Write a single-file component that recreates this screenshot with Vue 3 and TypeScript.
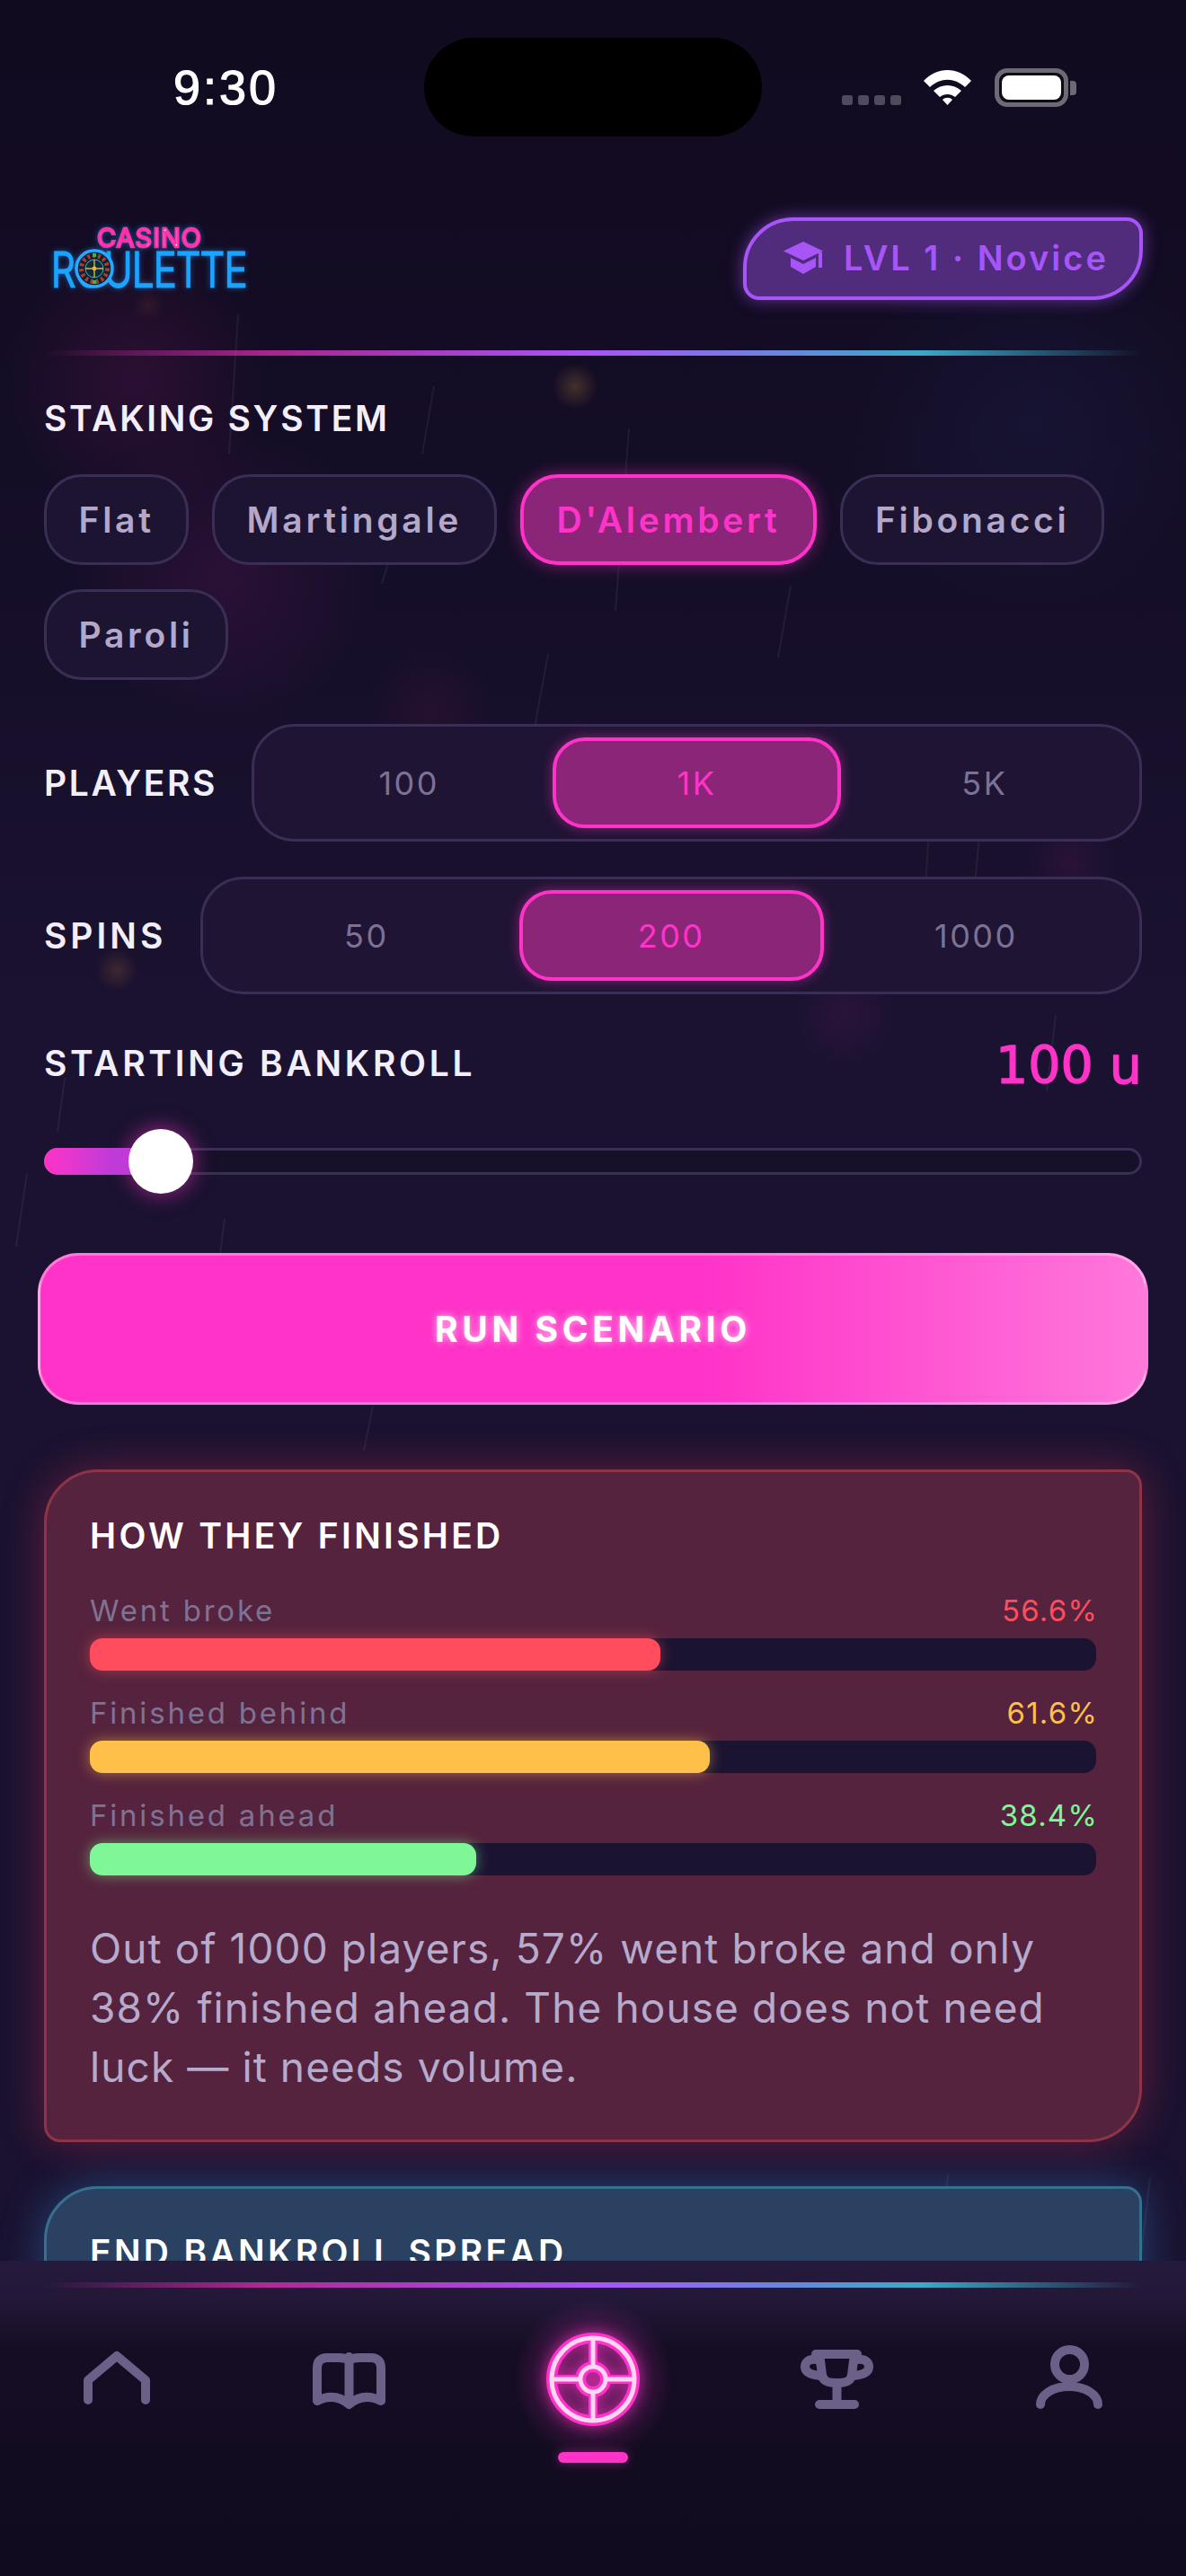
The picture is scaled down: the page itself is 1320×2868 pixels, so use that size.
<script setup lang="ts">
interface Bar { label: string; value: string; width: number; color: string }
const chips: string[] = ['Flat', 'Martingale', "D'Alembert", 'Fibonacci', 'Paroli']
const players: string[] = ['100', '1K', '5K']
const spins: string[] = ['50', '200', '1000']
const bars: Bar[] = [
  { label: 'Went broke', value: '56.6%', width: 56.7, color: '#ff4d5e' },
  { label: 'Finished behind', value: '61.6%', width: 61.6, color: '#ffc04a' },
  { label: 'Finished ahead', value: '38.4%', width: 38.4, color: '#7ff797' },
]
const streaks: number[][] = [
  [483, 430, 470, 505], [700, 477, 685, 680], [880, 652, 866, 732], [610, 728, 595, 810],
  [1040, 840, 1030, 985], [1090, 930, 1080, 1040], [1222, 1005, 1212, 1080], [72, 1200, 64, 1260],
  [30, 1307, 18, 1388], [250, 1357, 242, 1420], [415, 1565, 405, 1615], [1175, 1130, 1165, 1215],
  [265, 350, 255, 505], [440, 600, 425, 650], [1055, 2420, 1050, 2480], [1280, 2425, 1270, 2510],
]
const glows: number[][] = [
  [250, 640, 170, 255, 40, 190, 0.09], [640, 430, 26, 255, 190, 60, 0.2], [1150, 470, 210, 50, 100, 200, 0.08],
  [480, 790, 70, 255, 40, 120, 0.06], [130, 1080, 24, 255, 150, 60, 0.16], [1190, 960, 50, 255, 40, 160, 0.08],
  [940, 1130, 60, 255, 40, 190, 0.07], [165, 340, 18, 255, 150, 60, 0.08], [150, 420, 150, 255, 40, 170, 0.1],
]
function glowStyle(g: number[]) {
  return {
    left: `${g[0] - g[2]}px`, top: `${g[1] - g[2]}px`, width: `${g[2] * 2}px`, height: `${g[2] * 2}px`,
    background: `radial-gradient(circle, rgba(${g[3]},${g[4]},${g[5]},${g[6]}), transparent 70%)`,
  }
}
</script>

<template>
  <div class="phone">
    <div class="backdrop">
      <span v-for="(g, i) in glows" :key="i" class="glow" :style="glowStyle(g)"></span>
      <svg class="rain" width="1320" height="2868" viewBox="0 0 1320 2868">
        <line v-for="(s, i) in streaks" :key="i" :x1="s[0]" :y1="s[1]" :x2="s[2]" :y2="s[3]" stroke="#ffffff" stroke-opacity="0.06" stroke-width="2" />
      </svg>
    </div>

    <div class="status">
      <span class="time">9:30</span>
      <div class="island"></div>
      <div class="status-icons">
        <div class="signal"><i></i><i></i><i></i><i></i></div>
        <svg class="wifi" width="57" height="42" viewBox="0 0 57 42">
          <path d="M2 15 C17 -1 40 -1 55 15 L48 22 C36 11 21 11 9 22 Z" fill="#fff" />
          <path d="M13 26 C22 18 35 18 44 26 L37 33 C32 29 25 29 20 33 Z" fill="#fff" />
          <path d="M23 36 C26 33 31 33 34 36 L28.5 42 Z" fill="#fff" />
        </svg>
        <div class="battery"><div class="battery-fill"></div></div>
        <div class="battery-cap"></div>
      </div>
    </div>

    <header class="top">
      <svg class="logo" width="226" height="76" viewBox="0 0 226 76">
        <text class="logo-casino" x="112" y="24" text-anchor="middle" textLength="116" lengthAdjust="spacing">CASINO</text>
        <text class="logo-roulette" x="3" y="68" textLength="218" lengthAdjust="spacingAndGlyphs">ROULETTE</text>
        <g transform="translate(51 48)">
          <circle r="20" fill="#0f2030" stroke="#28a8ff" stroke-width="3.5" />
          <circle r="14.5" fill="none" stroke="#b33a2a" stroke-width="5" stroke-dasharray="3 3" />
          <circle r="10" fill="#0f2a33" stroke="#39b6c9" stroke-width="1" />
          <path d="M0 -10 V10 M-10 0 H10" stroke="#d8b24a" stroke-width="1.4" />
          <circle r="2.4" fill="#e0b84c" />
          <rect x="-2" y="-17" width="4" height="4" fill="#3bb54a" />
          <rect x="-2" y="13" width="4" height="4" fill="#3bb54a" />
        </g>
      </svg>
      <div class="level">
        <svg width="44" height="36" viewBox="0 0 44 36">
          <path d="M22 0 L44 10.5 L22 21 L0 10.5 Z" fill="#a855f7" />
          <path d="M8 18 L22 25 L36 18 V28 L22 36 L8 28 Z" fill="#a855f7" />
          <rect x="39" y="12" width="4" height="17" fill="#a855f7" />
        </svg>
        <span>LVL 1 · Novice</span>
      </div>
    </header>
    <div class="rule"></div>

    <main class="content">
      <h2 class="label">STAKING SYSTEM</h2>
      <div class="chips">
        <button v-for="c in chips" :key="c" class="chip" :class="{ on: c === `D'Alembert` }">{{ c }}</button>
      </div>

      <div class="seg-row">
        <h2 class="label players">PLAYERS</h2>
        <div class="seg">
          <span v-for="p in players" :key="p" class="seg-item" :class="{ on: p === '1K' }">{{ p }}</span>
        </div>
      </div>
      <div class="seg-row second">
        <h2 class="label spins">SPINS</h2>
        <div class="seg">
          <span v-for="p in spins" :key="p" class="seg-item" :class="{ on: p === '200' }">{{ p }}</span>
        </div>
      </div>

      <div class="bank-head">
        <h2 class="label bankroll">STARTING BANKROLL</h2>
        <span class="bank-value">100 u</span>
      </div>
      <div class="slider">
        <div class="slider-fill"></div>
        <div class="slider-thumb"></div>
      </div>

      <button class="run">RUN SCENARIO</button>

      <section class="card red">
        <h3 class="card-title">HOW THEY FINISHED</h3>
        <div v-for="b in bars" :key="b.label" class="stat">
          <div class="stat-head">
            <span class="stat-label">{{ b.label }}</span>
            <span class="stat-value" :style="{ color: b.color }">{{ b.value }}</span>
          </div>
          <div class="track">
            <div class="fill" :style="{ width: b.width + '%', background: b.color, boxShadow: `0 0 15px ${b.color}80` }"></div>
          </div>
        </div>
        <p class="note">Out of 1000 players, 57% went broke and only 38% finished ahead. The house does not need luck — it needs volume.</p>
      </section>

      <section class="card blue">
        <h3 class="card-title">END BANKROLL SPREAD</h3>
      </section>
    </main>

    <nav class="nav">
      <div class="rule nav-rule"></div>
      <div class="nav-items">
        <div class="nav-item">
          <svg width="84" height="84" viewBox="0 0 84 84" fill="none" stroke="#6d6088" stroke-width="10" stroke-linecap="round" stroke-linejoin="round">
            <path d="M11 64 V42 L43 15 L75 42 V64" />
          </svg>
        </div>
        <div class="nav-item">
          <svg width="84" height="84" viewBox="0 0 84 84" fill="none" stroke="#6d6088" stroke-width="10" stroke-linecap="round" stroke-linejoin="round">
            <path d="M6 65 V28 C6 21 10 17 17 17 H30 C35 17 39 18 41.5 20 C44 18 48 17 53 17 H66 C73 17 77 21 77 28 V65 C65 59 53 59 41.5 69 C30 59 18 59 6 65 Z" />
            <path d="M41.5 16 V68" />
          </svg>
        </div>
        <div class="nav-item active">
          <svg class="wheel" width="104" height="104" viewBox="0 0 104 104" fill="none">
            <g stroke="#ff33c8" stroke-width="12">
              <circle cx="52" cy="52" r="46" />
              <circle cx="52" cy="52" r="14" />
              <path d="M52 6 V38 M52 66 V98 M6 52 H38 M66 52 H98" stroke-width="10" />
            </g>
            <g stroke="#ffd6f4" stroke-width="5">
              <circle cx="52" cy="52" r="46" />
              <circle cx="52" cy="52" r="14" />
              <path d="M52 6 V38 M52 66 V98 M6 52 H38 M66 52 H98" />
            </g>
          </svg>
          <div class="indicator"></div>
        </div>
        <div class="nav-item">
          <svg width="84" height="84" viewBox="0 0 84 84" fill="none" stroke="#6d6088" stroke-width="10" stroke-linecap="round" stroke-linejoin="round">
            <path d="M19 13 H65" />
            <path d="M23 13 L26 36 C27 44 34 45 42.5 45 C51 45 58 44 59 36 L62 13" />
            <path d="M20 19 C11 18 7 22 7 27 C7 33 13 36 24 37 M65 19 C74 18 78 22 78 27 C78 33 72 36 61 37" />
            <path d="M42.5 45 V69 M23 69 H62" />
          </svg>
        </div>
        <div class="nav-item">
          <svg width="84" height="84" viewBox="0 0 84 84" fill="none" stroke="#6d6088" stroke-width="10" stroke-linecap="round" stroke-linejoin="round">
            <circle cx="42.5" cy="24.5" r="16.5" />
            <path d="M10 69 C10 58 24 49 42 49 C60 49 74 58 74 69" />
          </svg>
        </div>
      </div>
    </nav>
  </div>
</template>

<style>
html, body { margin: 0; background: #120c20; }
</style>

<style scoped>
.phone {
  position: relative;
  width: 1320px;
  height: 2868px;
  overflow: hidden;
  font-family: Inter, "Noto Sans", sans-serif;
  background: linear-gradient(180deg, #110b20 0%, #130c24 12%, #1a1230 40%, #1a1230 100%);
  color: #f3effa;
}
.backdrop { position: absolute; inset: 0; pointer-events: none; }
.glow { position: absolute; border-radius: 50%; }
.rain { position: absolute; left: 0; top: 0; }

.status { position: relative; height: 152px; }
.time { position: absolute; left: 193px; top: 66px; font: 400 54px/62px "Liberation Sans", sans-serif; letter-spacing: 3px; color: #fff; -webkit-text-stroke: 1.2px #fff; }
.island { position: absolute; left: 472px; top: 42px; width: 376px; height: 110px; border-radius: 55px; background: #000; }
.status-icons { position: absolute; left: 937px; top: 75px; width: 262px; height: 44px; display: flex; align-items: flex-end; }
.signal { display: flex; gap: 6px; margin-bottom: 2px; }
.signal i { width: 12px; height: 11px; border-radius: 3px; background: #4f4a5c; }
.wifi { margin-left: 23px; margin-bottom: 2px; }
.battery { margin-left: 24px; width: 82px; height: 43px; border: 5px solid #6d6975; border-radius: 14px; box-sizing: border-box; padding: 3px; background: #0d0a14; }
.battery-fill { width: 100%; height: 100%; background: #fff; border-radius: 8px; }
.battery-cap { width: 7px; height: 16px; margin: 0 0 13px 2px; background: #6d6975; border-radius: 0 4px 4px 0; }

.top { position: relative; display: flex; justify-content: space-between; align-items: flex-start; height: 238px; padding: 90px 48px 0 54px; box-sizing: border-box; }
.logo { margin-top: 9px; overflow: visible; filter: drop-shadow(0 0 3px rgba(30, 150, 255, 0.55)); }
.logo-casino { font: 400 29px Inter, sans-serif; fill: #ffd0ee; stroke: #ff2fa8; stroke-width: 2.4px; }
.logo-roulette { font: 200 52px Inter, sans-serif; fill: #c4f0ff; stroke: #1ba4ff; stroke-width: 3.2px; }
.level {
  display: flex; align-items: center; gap: 23px;
  width: 445px; height: 92px; box-sizing: border-box; padding: 0 0 2px 41px;
  border: 4px solid #a855f7; border-radius: 56px 18px 56px 18px;
  background: #512c7d; box-shadow: 0 0 18px rgba(168, 85, 247, 0.55);
  color: #a855f7; font-size: 38px; font-weight: 600; letter-spacing: 3px;
}
.rule { position: relative; height: 6px; margin: 0 50px; background: linear-gradient(90deg, transparent, #ff33c8a0 20%, #a855f7 50%, #3ba9c8 80%, transparent); }

.content { position: relative; padding: 0 49px; }
.label { margin: 0; font-size: 39px; font-weight: 600; letter-spacing: 2.7px; color: #f3effa; line-height: 46px; white-space: nowrap; }
.label.players { letter-spacing: 2.6px; }
.label.spins { letter-spacing: 4px; }
.label.bankroll { letter-spacing: 3.7px; }
.content > .label { padding-top: 47px; }
.chips { display: flex; flex-wrap: wrap; gap: 27px 26px; margin-top: 39px; }
.chip {
  font: 600 39px/1 Inter, sans-serif; letter-spacing: 3.7px; color: #b3a7ca;
  height: 101px; padding: 0 35.5px; border-radius: 42px; box-sizing: border-box;
  border: 3px solid #3a2e55; background: #1c1430;
}
.chip.on { color: #ff33c8; border: 4px solid #ff33c8; padding: 0 37px; background: #8a2578; box-shadow: 0 0 18px rgba(255, 51, 200, 0.45); }

.seg-row { display: flex; align-items: center; gap: 38px; margin-top: 49px; }
.seg-row.second { margin-top: 39px; }
.seg {
  flex: 1; display: grid; grid-template-columns: repeat(3, 1fr); height: 131px; box-sizing: border-box;
  padding: 12px; border: 3px solid #3a2e55; border-radius: 48px; background: #1f1433;
}
.seg-item { display: flex; align-items: center; justify-content: center; border-radius: 36px; font-size: 36px; letter-spacing: 2.5px; color: #7d7294; border: 4px solid transparent; }
.seg-item.on { color: #ff33c8; border-color: #ff33c8; background: #8a2578; box-shadow: 0 0 14px rgba(255, 51, 200, 0.45); }

.bank-head { display: flex; justify-content: space-between; align-items: flex-start; margin-top: 46px; }
.bank-head .label { margin-top: 8px; }
.bank-value { font: 400 57px/66px "DejaVu Sans", sans-serif; color: #ff33c8; -webkit-text-stroke: 1.4px #ff33c8; }
.slider { position: relative; height: 30px; margin-top: 59px; box-sizing: border-box; border: 3px solid #3a2e55; border-radius: 15px; background: #171029; }
.slider-fill { position: absolute; left: -3px; top: -3px; width: 110px; height: 30px; border-radius: 15px 0 0 15px; background: linear-gradient(90deg, #ff33c8, #a23fe0); }
.slider-thumb { position: absolute; left: 91px; top: -24px; width: 72px; height: 72px; border-radius: 50%; background: #fff; box-shadow: 0 0 24px rgba(255, 51, 200, 0.6); }

.run {
  display: block; width: 1236px; height: 169px; margin: 87px 0 0 -7px; box-sizing: border-box;
  border: 3px solid rgba(255, 255, 255, 0.35); border-radius: 45px;
  background: linear-gradient(90deg, #ff33c8 0%, #ff33c8 60%, #ff78db 100%);
  color: #fff; font: 700 39px/1 Inter, sans-serif; letter-spacing: 4.6px; text-shadow: 0 0 8px rgba(255, 255, 255, 0.7);
}

.card { box-sizing: border-box; border-radius: 60px 18px 60px 18px; padding: 48px 48px 0; }
.card.red { margin-top: 72px; height: 749px; border: 3px solid #8e3448; background: #55233d; box-shadow: 0 0 48px rgba(255, 60, 90, 0.32); }
.card.blue { margin-top: 49px; height: 300px; border: 3px solid #37708f; background: #2a4161; box-shadow: 0 0 48px rgba(60, 170, 255, 0.35); }
.card-title { margin: 0; font-size: 39px; font-weight: 600; letter-spacing: 3.3px; line-height: 46px; color: #fff; }
.stat + .stat { margin-top: 24px; }
.card-title + .stat { margin-top: 37px; }
.stat-head { display: flex; justify-content: space-between; height: 45px; align-items: center; margin-bottom: 9px; }
.stat-label { font-size: 33px; letter-spacing: 2.8px; color: #7f7393; }
.stat-value { font-size: 33px; letter-spacing: 1.2px; margin-right: -2px; }
.track { height: 36px; border-radius: 14px; background: #1b1332; }
.fill { height: 100%; border-radius: 14px; }
.note { margin: 48px 0 0; font-size: 46px; line-height: 66px; color: #b6aacd; font-weight: 400; letter-spacing: 1.1px; }

.nav {
  position: absolute; left: 0; right: 0; top: 2517px; bottom: 0;
  background: linear-gradient(180deg, #241a3c 0%, #241839 12%, #150d24 28%, #100b1e 100%);
}
.nav-rule { top: 24px; }
.nav-items { position: absolute; left: 0; top: 80px; width: 100%; }
.nav-item { position: absolute; top: 0; }
.nav-item:nth-child(1) { left: 87px; top: 11px; }
.nav-item:nth-child(2) { left: 347px; top: 11px; }
.nav-item.active { left: 608px; top: 0; width: 104px; }
.nav-item:nth-child(4) { left: 889px; top: 11px; }
.nav-item:nth-child(5) { left: 1148px; top: 11px; }
.wheel { position: relative; display: block; filter: drop-shadow(0 0 8px rgba(255, 51, 200, 0.7)); }
.active::before { content: ""; position: absolute; left: -40px; top: -40px; width: 184px; height: 184px; border-radius: 50%; background: radial-gradient(circle, rgba(255, 51, 200, 0.45), transparent 68%); }
.indicator { position: absolute; left: 13px; top: 133px; width: 78px; height: 12px; border-radius: 6px; background: #ff33c8; box-shadow: 0 0 12px rgba(255, 51, 200, 0.4); }
</style>
